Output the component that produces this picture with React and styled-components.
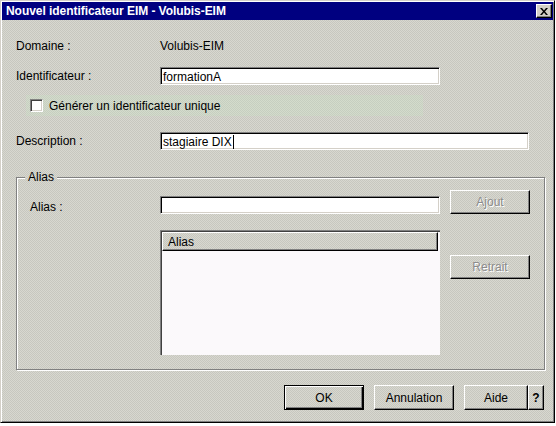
import React from "react";
import styled, { createGlobalStyle, css } from "styled-components";

const Global = createGlobalStyle`
  html, body { margin: 0; padding: 0; background: #ffffff; }
  body { font-family: "Liberation Sans", Arial, sans-serif; font-size: 12px; color: #000; }
`;

const dither = css`
  background-color: #cfcfc7;
  background-image: repeating-conic-gradient(#d8d8d0 0 25%, #c7c7bf 0 50%);
  background-size: 2px 2px;
  background-attachment: fixed;
`;

const Window = styled.div`
  box-sizing: border-box;
  width: 555px;
  height: 423px;
  ${dither};
  border: 1px solid;
  border-color: #d4d0c8 #000 #000 #d4d0c8;
  box-shadow: inset 1px 1px 0 #fff, inset -1px -1px 0 #808080;
  padding: 1px;
  display: flex;
  flex-direction: column;
`;

const TitleBar = styled.div`
  height: 18px;
  background: #000080;
  display: flex;
  align-items: center;
  justify-content: space-between;
  padding: 0 1px 0 4px;
`;

const Title = styled.span`
  color: #fff;
  font-weight: bold;
  font-size: 12px;
  font-family: "Liberation Sans", Arial, sans-serif;
  letter-spacing: -0.05px;
`;

const CloseBtn = styled.div`
  box-sizing: border-box;
  width: 16px;
  height: 14px;
  background: #d4d0c8;
  border: 1px solid;
  border-color: #fff #000 #000 #fff;
  box-shadow: inset -1px -1px 0 #808080;
  display: flex;
  align-items: center;
  justify-content: center;
`;

const Row = styled.div`
  display: flex;
  align-items: center;
  height: ${(p) => p.$h || 18}px;
  margin-top: ${(p) => p.$mt || 0}px;
  margin-left: 14px;
`;

const Label = styled.div`
  width: ${(p) => p.$w || 144}px;
  flex: none;
  white-space: nowrap;
`;

const Field = styled.div`
  box-sizing: border-box;
  width: ${(p) => p.$w}px;
  height: 18px;
  background: #fff;
  border: 1px solid;
  border-color: #808080 #fff #fff #808080;
  box-shadow: inset 1px 1px 0 #000, inset -1px -1px 0 #d4d0c8;
  padding: 1px 0 0 2px;
  display: flex;
  align-items: center;
  white-space: nowrap;
  flex: none;
`;

const Caret = styled.span`
  display: inline-block;
  width: 1px;
  height: 14px;
  background: #000;
  margin-left: 1px;
`;

const CheckPanel = styled.div`
  box-sizing: border-box;
  margin: 10px 0 0 24px;
  width: 397px;
  height: 21px;
  display: flex;
  align-items: center;
  gap: 6px;
  padding-left: 4px;
  background-color: #ccd4c4;
  background-image: repeating-conic-gradient(#d4dccc 0 25%, #c6cec0 0 50%);
  background-size: 2px 2px;
  background-attachment: fixed;
`;

const CheckBox = styled.div`
  box-sizing: border-box;
  width: 13px;
  height: 13px;
  background: #fff;
  border: 1px solid;
  border-color: #808080 #fff #fff #808080;
  box-shadow: inset 1px 1px 0 #404040, inset -1px -1px 0 #d4d0c8;
`;

const Group = styled.div`
  position: relative;
  box-sizing: border-box;
  margin: 27px 0 0 14px;
  width: 529px;
  height: 193px;
  border: 1px solid #808080;
  box-shadow: inset 1px 1px 0 #fff, 1px 1px 0 #fff;
  padding: 12px 13px 13px 13px;
  display: flex;
  flex-direction: column;
`;

const Legend = styled.span`
  position: absolute;
  top: -8px;
  left: 8px;
  padding: 0 3px;
  ${dither};
  line-height: 15px;
`;

const GroupRow = styled.div`
  display: flex;
  align-items: ${(p) => p.$align || "flex-end"};
  margin-top: ${(p) => p.$mt || 0}px;
`;

const ButtonCol = styled.div`
  margin-left: 10px;
  display: flex;
  flex-direction: column;
  padding-top: ${(p) => p.$pt || 0}px;
`;

const Button = styled.div`
  box-sizing: border-box;
  width: ${(p) => p.$w || 80}px;
  height: ${(p) => p.$h || 24}px;
  display: flex;
  align-items: center;
  justify-content: center;
  border: 1px solid;
  border-color: #fff #000 #000 #fff;
  box-shadow: inset -1px -1px 0 #808080;
  color: ${(p) => (p.$disabled ? "#8c8c8c" : "#000")};
  text-shadow: ${(p) => (p.$disabled ? "1px 1px 0 #fff" : "none")};
  font-weight: ${(p) => (p.$bold ? "bold" : "normal")};
  ${(p) =>
    p.$default &&
    css`
      border: 1px solid #000;
      box-shadow: inset 1px 1px 0 #fff, inset -1px -1px 0 #000, inset -2px -2px 0 #808080;
    `}
`;

const List = styled.div`
  box-sizing: border-box;
  width: 280px;
  height: 125px;
  background: #fbf9fb;
  border-top: 1px solid #808080;
  border-left: 1px solid #808080;
  box-shadow: inset 1px 1px 0 #404040;
  padding: 1px 2px 0 1px;
`;

const ListHeader = styled.div`
  box-sizing: border-box;
  height: 19px;
  ${dither};
  border: 1px solid;
  border-color: #fff #000 #000 #fff;
  box-shadow: inset -1px -1px 0 #808080;
  padding-left: 5px;
  display: flex;
  align-items: center;
`;

const Footer = styled.div`
  display: flex;
  justify-content: flex-end;
  gap: 10px;
  margin: 15px 9px 0 0;
`;

const SplitButton = styled.div`
  display: flex;
`;

export default function App() {
  return (
    <>
      <Global />
      <Window>
        <TitleBar>
          <Title>Nouvel identificateur EIM - Volubis-EIM</Title>
          <CloseBtn>
            <svg width="8" height="7" viewBox="0 0 8 7">
              <path d="M0 0h2l2 2.5L6 0h2L5 3.5 8 7H6L4 4.5 2 7H0l3-3.5z" fill="#000" />
            </svg>
          </CloseBtn>
        </TitleBar>

        <Row $mt={17}>
          <Label>Domaine :</Label>
          <span>Volubis-EIM</span>
        </Row>

        <Row $mt={12}>
          <Label>Identificateur :</Label>
          <Field $w={280}>formationA</Field>
        </Row>

        <CheckPanel>
          <CheckBox />
          <span>Générer un identificateur unique</span>
        </CheckPanel>

        <Row $mt={16}>
          <Label>Description :</Label>
          <Field $w={369}>
            stagiaire DIX
            <Caret />
          </Field>
        </Row>

        <Group>
          <Legend>Alias</Legend>
          <GroupRow>
            <Label $w={130}>Alias :</Label>
            <Field $w={280}>{""}</Field>
            <ButtonCol>
              <Button $disabled>Ajout</Button>
            </ButtonCol>
          </GroupRow>
          <GroupRow $mt={16} $align="flex-start">
            <Label $w={130} />
            <List>
              <ListHeader>Alias</ListHeader>
            </List>
            <ButtonCol $pt={25}>
              <Button $disabled>Retrait</Button>
            </ButtonCol>
          </GroupRow>
        </Group>

        <Footer>
          <Button $default $h={25}>OK</Button>
          <Button $h={25}>Annulation</Button>
          <SplitButton>
            <Button $w={64} $h={25}>Aide</Button>
            <Button $w={16} $h={25} $bold>?</Button>
          </SplitButton>
        </Footer>
      </Window>
    </>
  );
}
